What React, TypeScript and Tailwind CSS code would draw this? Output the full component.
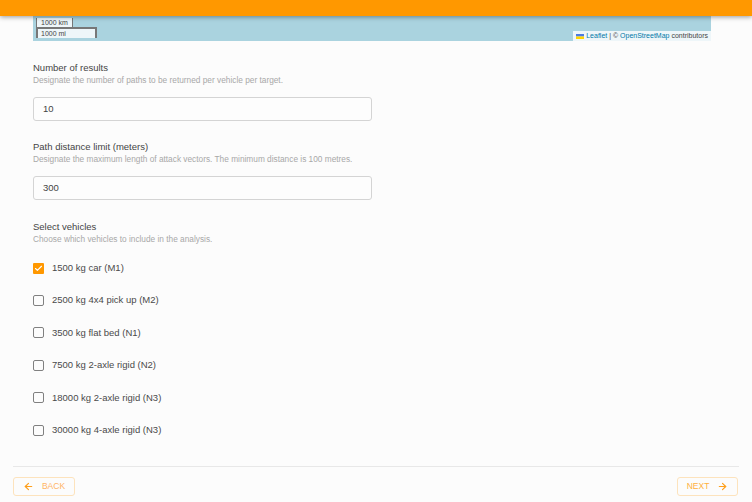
import React from "react";
import { ArrowLeft, ArrowRight, Check } from "lucide-react";

const vehicles = [
  { label: "1500 kg car (M1)", checked: true },
  { label: "2500 kg 4x4 pick up (M2)", checked: false },
  { label: "3500 kg flat bed (N1)", checked: false },
  { label: "7500 kg 2-axle rigid (N2)", checked: false },
  { label: "18000 kg 2-axle rigid (N3)", checked: false },
  { label: "30000 kg 4-axle rigid (N3)", checked: false },
];

function Field({ title, hint, value }: { title: string; hint: string; value: string }) {
  return (
    <div>
      <div className="text-[9.5px] leading-[13px] text-[#444]">{title}</div>
      <div className="text-[8.3px] leading-[11px] mt-[1px] text-[#a8a8a8]">{hint}</div>
      <div className="mt-[11px] w-[339px] h-[24px] flex items-center px-[9px] border border-[#d4d4d4] rounded-[3px] bg-[#fdfdfd] text-[9.5px] text-[#444]">
        {value}
      </div>
    </div>
  );
}

function VehicleRow({ label, checked }: { label: string; checked: boolean }) {
  return (
    <div className="h-[32.4px] flex items-center gap-[8px]">
      {checked ? (
        <span className="w-[11px] h-[11px] rounded-[1px] bg-[#ff9800] flex items-center justify-center">
          <Check size={9} strokeWidth={3} className="text-white" />
        </span>
      ) : (
        <span className="w-[11px] h-[11px] rounded-[2px] border-[1.5px] border-[#808080]" />
      )}
      <span className="text-[9.5px] text-[#4a4a4a]">{label}</span>
    </div>
  );
}

export default function App() {
  return (
    <div className="w-[752px] h-[502px] overflow-hidden flex flex-col bg-[#fcfcfc] font-['Liberation_Sans',Arial,sans-serif]">
      <div className="h-4 shrink-0 bg-[#ff9800] shadow-[0_1px_5px_rgba(0,0,0,0.4)] relative z-10" />

      <div className="relative shrink-0 h-[25px] ml-[33px] w-[678px] bg-[#aad3df]">
        <div className="absolute left-[3px] top-[2px] w-[37px] h-[9px] bg-white/80 border border-t-0 border-b-0 border-[#777] text-[7px] leading-[9px] pl-[4px] text-[#444]">
          1000 km
        </div>
        <div className="absolute left-[3px] top-[11px] w-[61px] h-[11px] bg-white/80 border-2 border-b-0 border-[#777] text-[7px] leading-[10px] pl-[3px] text-[#444]">
          1000 mi
        </div>
        <div className="absolute right-0 bottom-0 h-[10px] flex items-center gap-[2px] px-[3px] bg-white/80 text-[7px] leading-[10px] text-[#444]">
          <svg width="8" height="5" viewBox="0 0 8 5">
            <rect width="8" height="2.5" fill="#4C7BE1" />
            <rect y="2.5" width="8" height="2.5" fill="#FFD500" />
          </svg>
          <span>
            <span className="text-[#0078a8]">Leaflet</span> | © <span className="text-[#0078a8]">OpenStreetMap</span> contributors
          </span>
        </div>
      </div>

      <div className="flex-1 flex flex-col pl-[33px] pt-[20px]">
        <Field title="Number of results" hint="Designate the number of paths to be returned per vehicle per target." value="10" />
        <div className="mt-[19px]">
          <Field
            title="Path distance limit (meters)"
            hint="Designate the maximum length of attack vectors. The minimum distance is 100 metres."
            value="300"
          />
        </div>
        <div className="mt-[20px]">
          <div className="text-[9.5px] leading-[13px] text-[#444]">Select vehicles</div>
          <div className="text-[8.3px] leading-[11px] mt-[1px] text-[#a8a8a8]">Choose which vehicles to include in the analysis.</div>
          <div className="mt-[7px] flex flex-col">
            {vehicles.map((v) => (
              <VehicleRow key={v.label} label={v.label} checked={v.checked} />
            ))}
          </div>
        </div>
      </div>

      <div className="shrink-0 mx-[13px] border-t border-[#e8e8e8] pt-[10px] pb-[6px] pr-[1px] flex justify-between">
        <button className="w-[62px] h-[19px] flex items-center justify-center gap-[8px] border border-[#fde3bd] rounded-[3px] text-[8.5px] text-[#ffb566]">
          <ArrowLeft size={11} strokeWidth={2.5} className="text-[#ff9f1a]" />
          BACK
        </button>
        <button className="w-[61px] h-[19px] flex items-center justify-center gap-[8px] border border-[#fde3bd] rounded-[3px] text-[8.5px] text-[#ffb040]">
          NEXT
          <ArrowRight size={11} strokeWidth={2.5} className="text-[#ff9f1a]" />
        </button>
      </div>
    </div>
  );
}
